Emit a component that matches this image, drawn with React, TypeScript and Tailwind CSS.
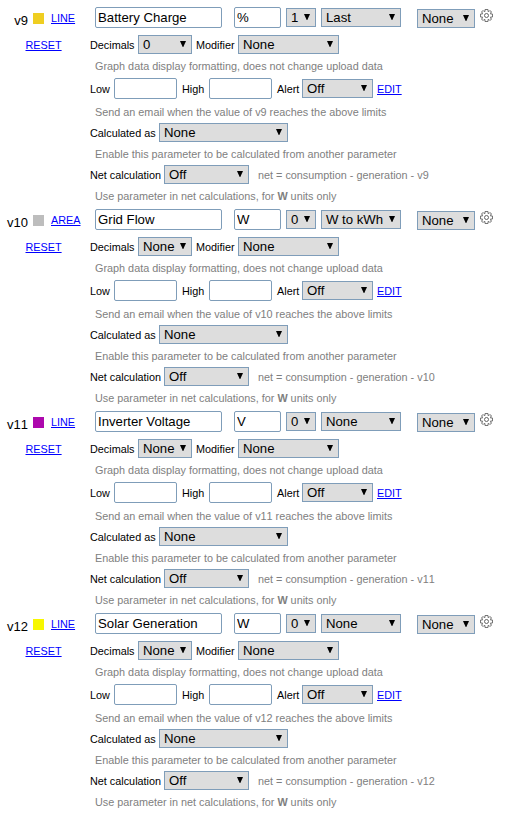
import React from 'react';

type Param = {
  id: string;
  color: string;
  chart: string;
  name: string;
  unit: string;
  axis: string;
  summary: string;
  decimals: string;
};

const params: Param[] = [
  { id: 'v9', color: 'bg-[#efce21]', chart: 'LINE', name: 'Battery Charge', unit: '%', axis: '1', summary: 'Last', decimals: '0' },
  { id: 'v10', color: 'bg-[#bdbdbd]', chart: 'AREA', name: 'Grid Flow', unit: 'W', axis: '0', summary: 'W to kWh', decimals: 'None' },
  { id: 'v11', color: 'bg-[#ad08ad]', chart: 'LINE', name: 'Inverter Voltage', unit: 'V', axis: '0', summary: 'None', decimals: 'None' },
  { id: 'v12', color: 'bg-[#f7f700]', chart: 'LINE', name: 'Solar Generation', unit: 'W', axis: '0', summary: 'None', decimals: 'None' },
];

function Select({ value, className }: { value: string; className: string }) {
  return (
    <button
      type="button"
      className={`flex h-[19px] shrink-0 items-start justify-between border border-[#7f9db9] bg-[#dddddd] pl-1 pr-[5px] text-[13.2px] leading-[17px] whitespace-nowrap text-black ${className}`}
    >
      <span>{value}</span>
      <svg width="6" height="6" viewBox="0 0 6 6" className="mt-[5px] shrink-0">
        <path d="M0 0H6L3.3 6H2.7Z" fill="#000" />
      </svg>
    </button>
  );
}

function Field({ value, className }: { value?: string; className: string }) {
  return (
    <input
      type="text"
      defaultValue={value}
      className={`h-[21px] shrink-0 rounded-[2px] border border-[#7f9db9] bg-white px-[2px] text-[13.2px] leading-[15px] text-black outline-none ${className}`}
    />
  );
}

function Gear() {
  return (
    <svg width="13" height="13" viewBox="0 0 13 13" fill="none" stroke="#666" strokeWidth="1" className="ml-[5px] mt-[2px] shrink-0">
      <path d="M5 2.5V.5H8V2.5M10.5 5H12.5V8H10.5M8 10.5V12.5H5V10.5M2.5 8H.5V5H2.5" strokeWidth=".9" />
      <path d="M8 2L9 2.5L10 1.5L11.5 3L10.5 4L11 5M11 8L10.5 9L11.5 10L10 11.5L9 10.5L8 11M5 11L4 10.5L3 11.5L1.5 10L2.5 9L2 8M2 5L2.5 4L1.5 3L3 1.5L4 2.5L5 2" />
      <circle cx="6.5" cy="6.5" r="2" />
    </svg>
  );
}

function Link({ children, className = '' }: { children: string; className?: string }) {
  return (
    <a href="#" className={`text-[10.833px] text-[#0000ff] underline ${className}`}>
      {children}
    </a>
  );
}

function Hint({ children, className }: { children: React.ReactNode; className: string }) {
  return <p className={`h-4 pl-[5px] text-[10.833px] leading-4 text-[#808080] ${className}`}>{children}</p>;
}

function ParamId({ id }: { id: string }) {
  return <span className="[font-kerning:none]">{id}</span>;
}

function ParamBlock({ p }: { p: Param }) {
  return (
    <section className="h-[202px]">
      <div className="flex h-7 items-start">
        <span className="mt-[6px] w-7 text-right text-[13px] leading-4">
          <ParamId id={p.id} />
        </span>
        <span className={`ml-[5px] mt-[6px] size-[11px] ${p.color}`} />
        <span className="ml-[7px] mt-[3px] flex w-11 leading-4">
          <Link>{p.chart}</Link>
        </span>
        <Field value={p.name} className="w-[127px]" />
        <Field value={p.unit} className="ml-3 w-[47px]" />
        <Select value={p.axis} className="ml-[5px] mt-px w-[30px]" />
        <Select value={p.summary} className="ml-[5px] mt-px w-20" />
        <Select value="None" className="ml-4 mt-[2px] w-[58px]" />
        <Gear />
      </div>
      <div className="flex">
        <div className="w-[90px] pl-[25.5px] leading-[19px]">
          <Link className="block pt-px leading-[19px]">RESET</Link>
        </div>
        <div className="text-[10.833px] text-black">
          <div className="flex h-[19px] leading-5">
            <span className="w-12">Decimals</span>
            <Select value={p.decimals} className="w-[54px]" />
            <span className="ml-1 w-[42px]">Modifier</span>
            <Select value="None" className="w-[101px]" />
          </div>
          <Hint className="mt-1">Graph data display formatting, does not change upload data</Hint>
          <div className="mt-1 flex h-[21px] leading-[22px]">
            <span className="w-6">Low</span>
            <Field className="w-[63px]" />
            <span className="ml-[5px] w-[27px]">High</span>
            <Field className="w-[63px]" />
            <span className="ml-[5px] w-[25px]">Alert</span>
            <Select value="Off" className="mt-px w-[71px]" />
            <Link className="ml-1">EDIT</Link>
          </div>
          <Hint className="mt-[5px]">
            Send an email when the value of <ParamId id={p.id} /> reaches the above limits
          </Hint>
          <div className="mt-[3px] flex h-[19px] leading-5">
            <span className="w-[69px]">Calculated as</span>
            <Select value="None" className="w-[129px]" />
          </div>
          <Hint className="mt-1">Enable this parameter to be calculated from another parameter</Hint>
          <div className="mt-[3px] flex h-[19px] leading-5">
            <span className="w-[74px]">Net calculation</span>
            <Select value="Off" className="w-[85px]" />
            <span className="ml-[9px] text-[#808080]">
              net = consumption - generation - <ParamId id={p.id} />
            </span>
          </div>
          <Hint className="mt-1">
            Use parameter in net calculations, for <b>W</b> units only
          </Hint>
        </div>
      </div>
    </section>
  );
}

export default function App() {
  return (
    <main className="h-[814px] w-[506px] overflow-hidden whitespace-nowrap bg-white pt-[7px] font-['Liberation_Sans',Arial,sans-serif] text-black">
      {params.map((p) => (
        <ParamBlock key={p.id} p={p} />
      ))}
    </main>
  );
}
